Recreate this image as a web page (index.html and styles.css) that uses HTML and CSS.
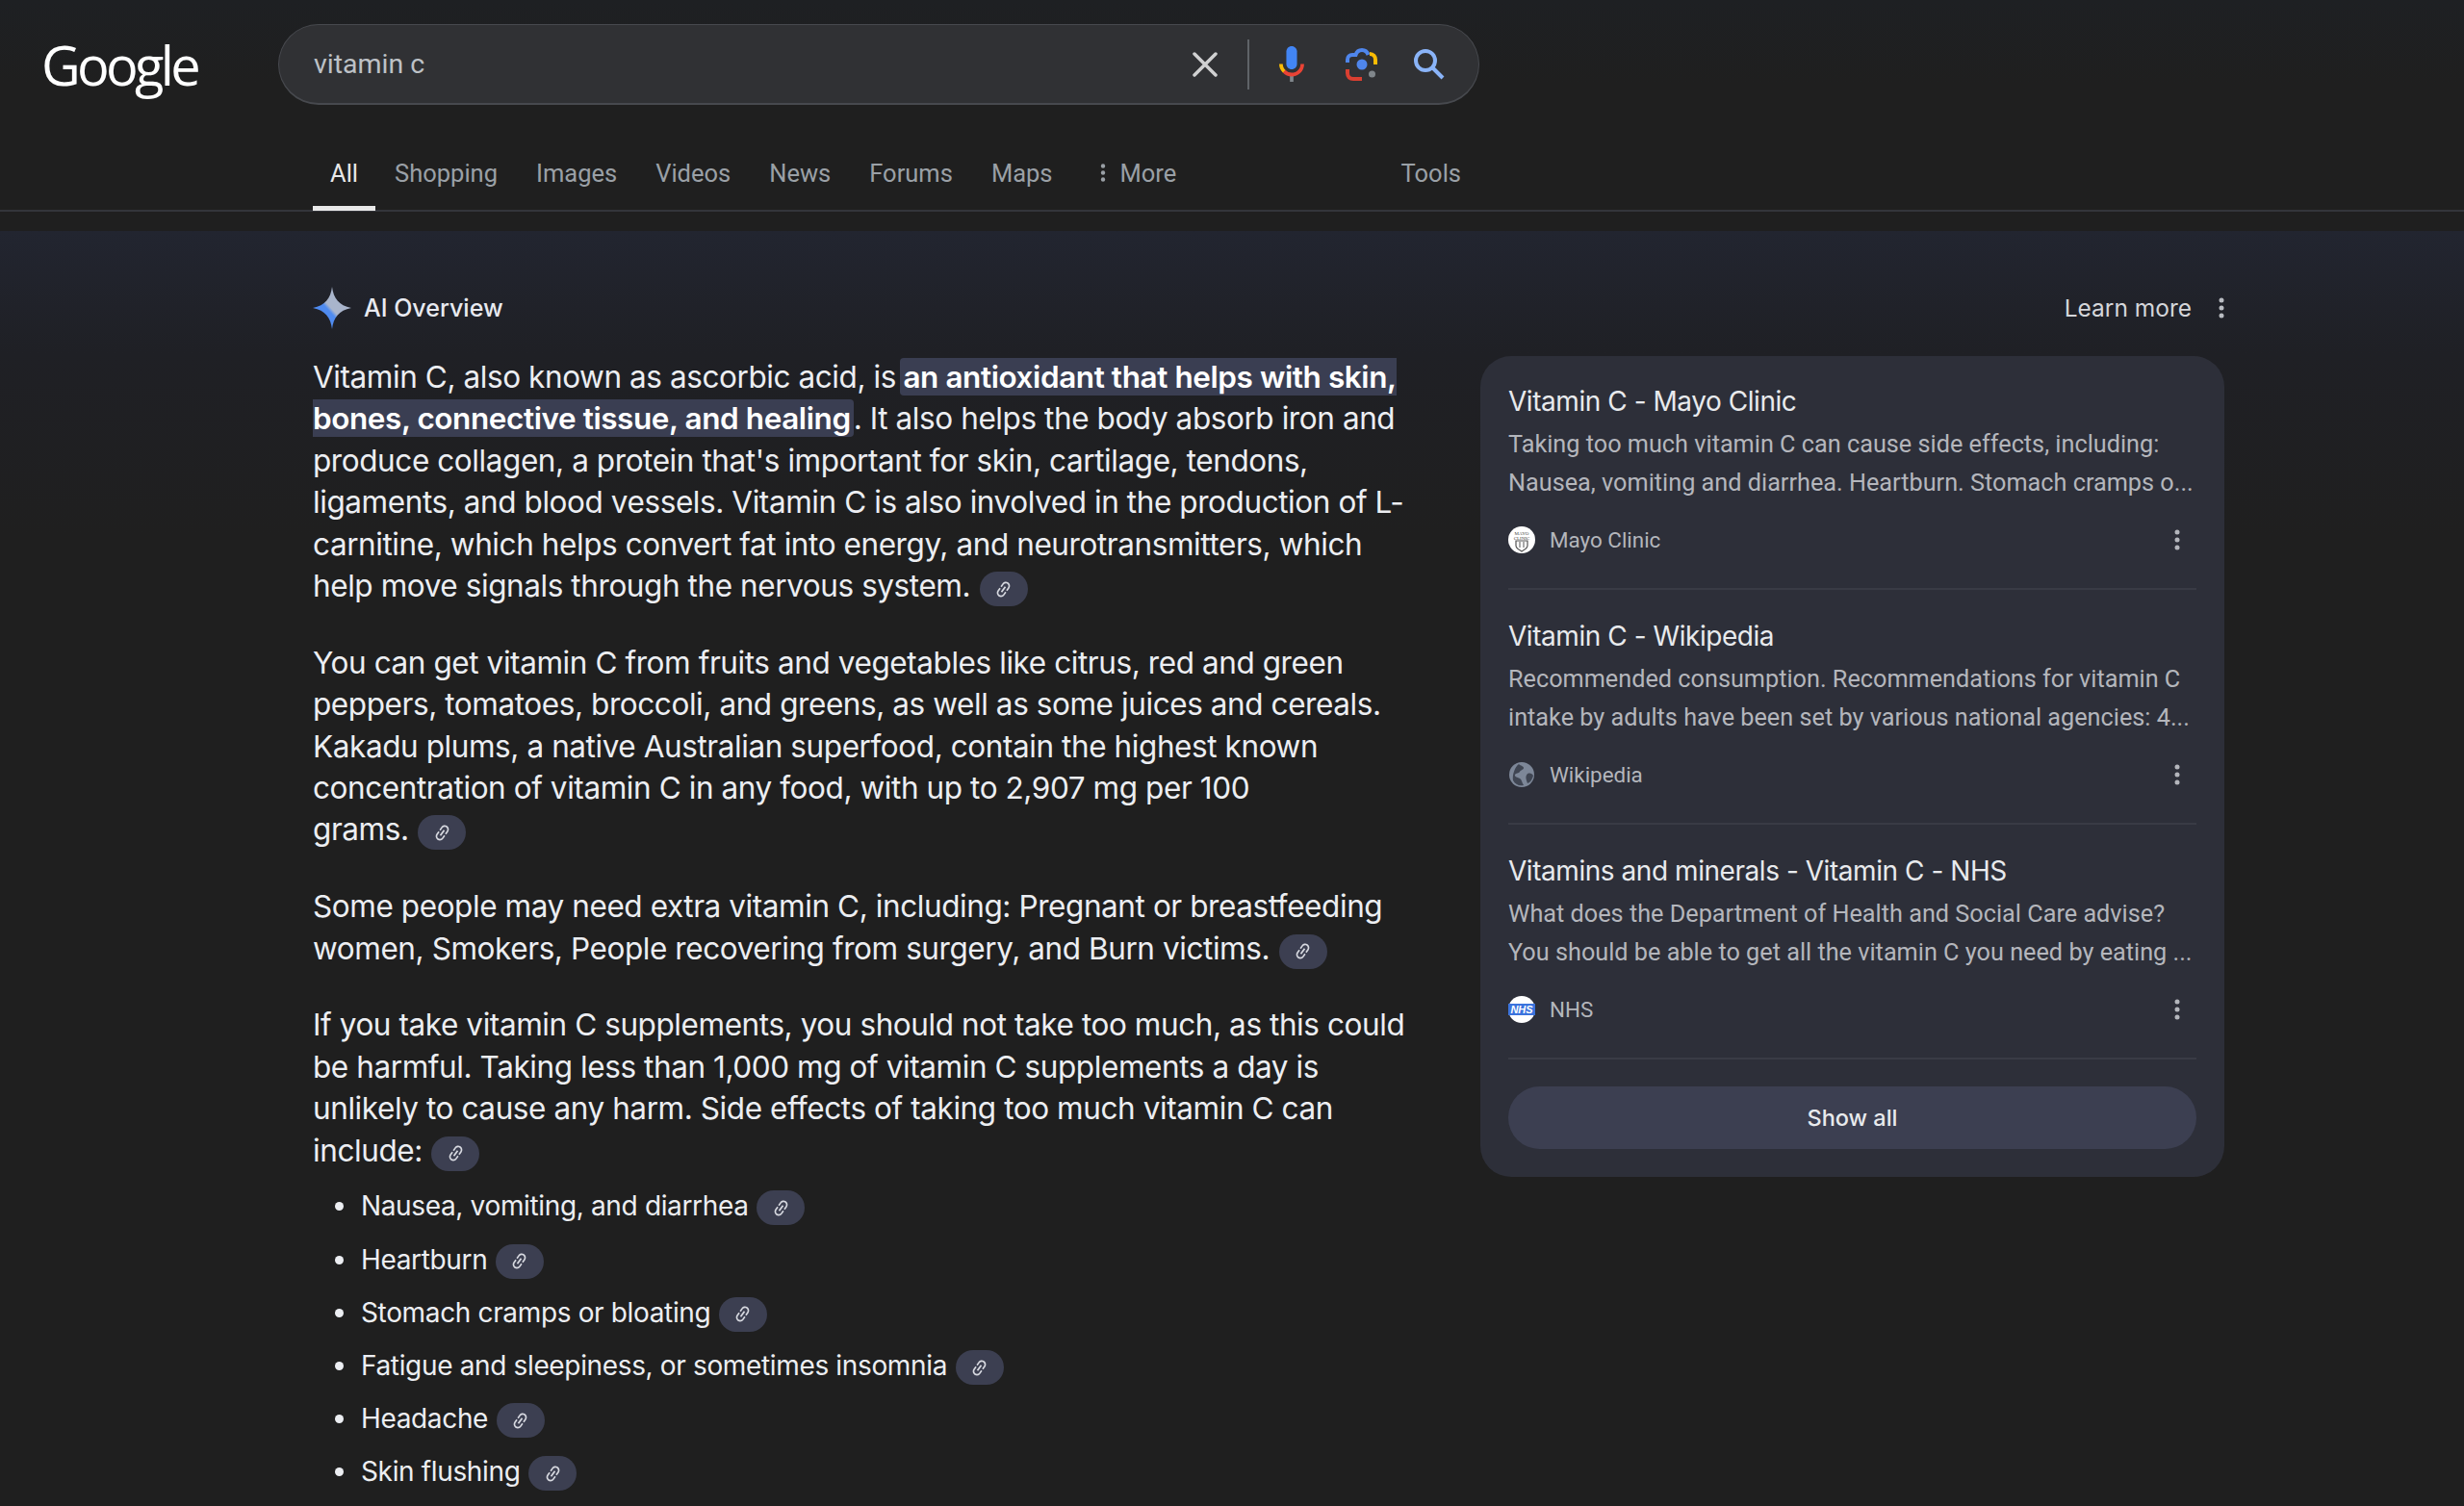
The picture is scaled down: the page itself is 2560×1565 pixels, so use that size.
FILE: index.html
```html
<!DOCTYPE html>
<html lang="en">
<head>
  <meta charset="UTF-8" />
  <title>vitamin c - Google Search</title>
  <link rel="stylesheet" href="styles.css">
</head>
<body>
  <svg class="defs" width="0" height="0">
    <symbol id="link" viewBox="0 0 24 24">
      <path transform="rotate(-55 12 12)" d="M3.9 12c0-1.71 1.39-3.1 3.1-3.1h4V7H7c-2.76 0-5 2.24-5 5s2.24 5 5 5h4v-1.9H7c-1.71 0-3.1-1.39-3.1-3.1zM8 13h8v-2H8v2zm9-6h-4v1.9h4c1.71 0 3.1 1.39 3.1 3.1s-1.39 3.1-3.1 3.1h-4V17h4c2.76 0 5-2.24 5-5s-2.24-5-5-5z"/>
    </symbol>
    <symbol id="dots" viewBox="0 0 6 24">
      <circle cx="3" cy="4" r="2.5"/><circle cx="3" cy="12" r="2.5"/><circle cx="3" cy="20" r="2.5"/>
    </symbol>
  </svg>

  <header>
    <div class="top-row">
      <div class="logo">Google</div>
      <div class="search-box">
        <span class="query">vitamin c</span>
        <svg class="ico-clear" viewBox="0 0 26 26"><path d="M2 2l22 22M24 2L2 24"/></svg>
        <span class="search-divider"></span>
        <svg class="ico-mic" viewBox="5 2 14 20">
          <path fill="#4285f4" d="m12 15c1.66 0 3-1.31 3-2.97v-7.02c0-1.66-1.34-3.01-3-3.01s-3 1.34-3 3.01v7.02c0 1.66 1.34 2.97 3 2.97z"/>
          <path fill="#80868b" d="m11 18.08h2v3.92h-2z"/>
          <path fill="#fbbc04" d="m7.05 16.87c-1.27-1.33-2.05-2.83-2.05-4.87h2c0 1.45 0.56 2.42 1.47 3.38v0.32l-1.15 1.18z"/>
          <path fill="#ea4335" d="m12 16.93a4.97 5.25 0 0 1 -3.54 -1.55l-1.41 1.49c1.26 1.34 3.02 2.13 4.95 2.13 3.87 0 6.99-2.92 6.99-6.99h-1.99c0 2.92-2.24 4.92-5 4.92z"/>
        </svg>
        <svg class="ico-lens" viewBox="0 0 33 34" fill="none" stroke-width="4">
          <path stroke="#4f86ec" d="M2 15v-3c0-3 2-5 5-5h3.5c1-3 3.5-5 6.500-5s5.500 2 6.500 5"/>
          <path stroke="#fbbc04" d="M25 6c4 0 6 3 6 6v5"/>
          <path stroke="#d93f31" d="M2 22v4c0 4 2.500 6 6 6h9"/>
          <circle cx="17" cy="17" r="5.500" fill="#4f86ec" stroke="none"/>
          <circle cx="27.500" cy="27" r="3.500" fill="#80868b" stroke="none"/>
        </svg>
        <svg class="ico-search" viewBox="0 0 32 32" fill="none"><circle cx="12" cy="12" r="10"/><path d="M19.500 19.500L30 30"/></svg>
      </div>
    </div>
    <nav class="tabs">
      <a class="tab active">All</a>
      <a class="tab">Shopping</a>
      <a class="tab">Images</a>
      <a class="tab">Videos</a>
      <a class="tab">News</a>
      <a class="tab">Forums</a>
      <a class="tab">Maps</a>
      <a class="tab more"><svg class="dots-ico"><use href="#dots"/></svg>More</a>
      <a class="tab tools">Tools</a>
    </nav>
  </header>

  <main class="overview">
    <div class="ov-head">
      <div class="ov-title">
        <svg class="star" viewBox="0 0 40 44">
          <defs>
            <linearGradient id="starfill" x1="0.2" y1="0.85" x2="0.8" y2="0.25">
              <stop offset="0.42" stop-color="#4f8bf0"/>
              <stop offset="0.52" stop-color="#a9b5cc"/>
            </linearGradient>
          </defs>
          <path fill="url(#starfill)" d="M20 0C21.500 12 27 19.500 40 22C27 24.500 21.500 32 20 44C18.500 32 13 24.500 0 22C13 19.500 18.500 12 20 0z"/>
        </svg>
        <span>AI Overview</span>
      </div>
      <div class="ov-learn">
        <span>Learn more</span>
        <svg class="dots-ico"><use href="#dots"/></svg>
      </div>
    </div>

    <div class="ov-body">
      <article class="answer">
        <p>Vitamin C, also known as ascorbic acid, is <mark>an antioxidant that helps with skin,<br>bones, connective tissue, and healing</mark>. It also helps the body absorb iron and<br>produce collagen, a protein that's important for skin, cartilage, tendons,<br>ligaments, and blood vessels. Vitamin C is also involved in the production of L-<br>carnitine, which helps convert fat into energy, and neurotransmitters, which<br>help move signals through the nervous system. <span class="chip"><svg><use href="#link"/></svg></span></p>
        <p>You can get vitamin C from fruits and vegetables like citrus, red and green<br>peppers, tomatoes, broccoli, and greens, as well as some juices and cereals.<br>Kakadu plums, a native Australian superfood, contain the highest known<br>concentration of vitamin C in any food, with up to 2,907 mg per 100<br>grams. <span class="chip"><svg><use href="#link"/></svg></span></p>
        <p>Some people may need extra vitamin C, including: Pregnant or breastfeeding<br>women, Smokers, People recovering from surgery, and Burn victims. <span class="chip"><svg><use href="#link"/></svg></span></p>
        <p>If you take vitamin C supplements, you should not take too much, as this could<br>be harmful. Taking less than 1,000 mg of vitamin C supplements a day is<br>unlikely to cause any harm. Side effects of taking too much vitamin C can<br>include: <span class="chip"><svg><use href="#link"/></svg></span></p>
        <ul>
          <li>Nausea, vomiting, and diarrhea <span class="chip"><svg><use href="#link"/></svg></span></li>
          <li>Heartburn <span class="chip"><svg><use href="#link"/></svg></span></li>
          <li>Stomach cramps or bloating <span class="chip"><svg><use href="#link"/></svg></span></li>
          <li>Fatigue and sleepiness, or sometimes insomnia <span class="chip"><svg><use href="#link"/></svg></span></li>
          <li>Headache <span class="chip"><svg><use href="#link"/></svg></span></li>
          <li>Skin flushing <span class="chip"><svg><use href="#link"/></svg></span></li>
        </ul>
      </article>

      <aside class="sources">
        <div class="source">
          <div class="source-title">Vitamin C - Mayo Clinic</div>
          <div class="source-text">Taking too much vitamin C can cause side effects, including:<br>Nausea, vomiting and diarrhea. Heartburn. Stomach cramps o...</div>
          <div class="source-site">
            <svg class="favicon" viewBox="0 0 28 28">
              <circle cx="14" cy="14" r="14" fill="#fff"/>
              <text class="fav-mayo" x="14" y="9">MAYO</text>
              <text class="fav-mayo" x="14" y="13.500">CLINIC</text>
              <path d="M8 15h12v5c0 3-3 4-6 6c-3-2-6-3-6-6z" fill="none" stroke="#555" stroke-width="1.200"/>
              <path d="M12 16v6M16 16v6" stroke="#555" stroke-width="1"/>
            </svg>
            <span>Mayo Clinic</span>
            <svg class="dots-ico"><use href="#dots"/></svg>
          </div>
        </div>
        <div class="source">
          <div class="source-title">Vitamin C - Wikipedia</div>
          <div class="source-text">Recommended consumption. Recommendations for vitamin C<br>intake by adults have been set by various national agencies: 4...</div>
          <div class="source-site">
            <svg class="favicon" viewBox="0 0 28 28">
              <circle cx="14" cy="14" r="13" fill="#7d8798"/>
              <path d="M11 3c2 2 5 2 5 4s-3 2-4 4-4 1-5 3 3 3 5 4 2 4 4 7c-5 1-9-1-11-5-1-6 2-14 6-17z" fill="#3f4552"/>
              <path d="M20 13c3-1 5 0 6 2-1 4-3 7-6 8-1-3-3-7 0-10z" fill="#3f4552"/>
            </svg>
            <span>Wikipedia</span>
            <svg class="dots-ico"><use href="#dots"/></svg>
          </div>
        </div>
        <div class="source">
          <div class="source-title">Vitamins and minerals - Vitamin C - NHS</div>
          <div class="source-text">What does the Department of Health and Social Care advise?<br>You should be able to get all the vitamin C you need by eating ...</div>
          <div class="source-site">
            <svg class="favicon" viewBox="0 0 28 28">
              <circle cx="14" cy="14" r="14" fill="#fff"/>
              <rect x="0" y="8" width="28" height="12" fill="#3b73dd"/>
              <text class="fav-nhs" x="14" y="18">NHS</text>
            </svg>
            <span>NHS</span>
            <svg class="dots-ico"><use href="#dots"/></svg>
          </div>
        </div>
        <button class="show-all">Show all</button>
      </aside>
    </div>
  </main>
</body>
</html>
```

FILE: styles.css
```css
html, body {
  margin: 0;
  height: 100%;
  overflow: hidden;
}

body {
  background-color: #1f1f1f;
  color: #e8eaf0;
  font-family: 'Inter', sans-serif;
}

.defs {
  position: absolute;
}

header {
  height: 218px;
  border-bottom: 2px solid #33353a;
  background: linear-gradient(#1e2023, #1f1f1f 40%);
}

.top-row {
  display: flex;
  align-items: center;
  padding-top: 25px;
}

.logo {
  width: 246px;
  padding-left: 43px;
  font-family: 'Open Sans', sans-serif;
  font-size: 56px;
  font-weight: 500;
  line-height: 83px;
  letter-spacing: -3.7px;
  color: #fff;
}

.search-box {
  width: 1246px;
  height: 81px;
  border: 1px solid #47494e;
  border-bottom-width: 2px;
  border-radius: 42px;
  background-color: #303134;
  display: flex;
  align-items: center;
}

.query {
  margin-left: 36px;
  flex: 1;
  font-family: 'Roboto', sans-serif;
  font-size: 28.500px;
  color: #bdc1c6;
}

.search-box svg {
  flex: none;
}

.ico-clear {
  width: 26px;
  height: 26px;
  stroke: #d0d1d2;
  stroke-width: 3.500;
  stroke-linecap: round;
}

.search-divider {
  width: 2px;
  height: 52px;
  margin: 0 31px;
  background-color: #5f6368;
}

.ico-mic {
  width: 26px;
  height: 37px;
}

.ico-lens {
  width: 33px;
  height: 34px;
  margin-left: 43px;
}

.ico-search {
  width: 32px;
  height: 32px;
  margin: 0 35px 0 38px;
  stroke: #8ab4f8;
  stroke-width: 4;
}

.tabs {
  display: flex;
  margin: 30px 0 0 325px;
  width: 1213px;
  height: 80px;
  font-family: 'Roboto', sans-serif;
  font-size: 25.500px;
}

.tab {
  box-sizing: border-box;
  padding: 26px 20px 0;
  color: #9aa0a6;
  height: 80px;
}

.tab.active {
  padding: 26px 18px 0;
  color: #e8e8e8;
  border-bottom: 5px solid #e8e8e8;
}

.tab.more {
  display: flex;
  gap: 15px;
  margin-left: 9px;
}

.tab.more .dots-ico {
  height: 21px;
  margin-top: 4px;
}

.tab.tools {
  margin-left: auto;
}

.dots-ico {
  width: 6px;
  height: 24px;
  fill: #9aa0a6;
  flex: none;
}

.overview {
  margin-top: 20px;
  padding: 58px 249px 0 325px;
  height: 1000px;
  background: linear-gradient(#222530, #1f2025 12%, #1f1f1f 30%);
}

.ov-head {
  display: flex;
  justify-content: space-between;
  align-items: center;
  height: 44px;
  margin-bottom: 28px;
}

.ov-title {
  display: flex;
  align-items: center;
  gap: 13px;
  font-size: 25px;
  font-weight: 500;
  color: #e8eaf0;
}

.star {
  width: 40px;
  height: 44px;
}

.ov-learn {
  display: flex;
  align-items: center;
  gap: 28px;
  font-size: 24.500px;
  color: #d4d6da;
}

.ov-learn .dots-ico {
  fill: #b9bcc2;
}

.ov-body {
  display: flex;
}

.answer {
  width: 1213px;
  flex: none;
  font-size: 31.500px;
  line-height: 43.400px;
  letter-spacing: -0.42px;
  color: #eceef2;
}

.answer p {
  margin: 0 0 36.400px;
}

mark {
  background-color: #3a3e52;
  color: #fff;
  font-weight: 600;
  border-radius: 4px;
  padding: 0 3px;
  margin-left: -4px;
}

.chip {
  display: inline-flex;
  align-items: center;
  justify-content: center;
  width: 50px;
  height: 36px;
  margin-left: 1px;
  border-radius: 18px;
  background-color: #3c3f51;
  vertical-align: -2.500px;
}

.chip svg {
  width: 21px;
  height: 21px;
  fill: #d7d9e0;
}

.answer ul {
  margin: -21px 0 0;
  padding-left: 50px;
  list-style: none;
  font-size: 28px;
  letter-spacing: -0.35px;
}

.answer li {
  position: relative;
  height: 55.200px;
}

.answer li::before {
  content: "";
  position: absolute;
  left: -27px;
  top: 17px;
  width: 9px;
  height: 9px;
  border-radius: 50%;
  background-color: #eceef2;
}

.sources {
  width: 773px;
  height: 853px;
  box-sizing: border-box;
  padding: 0 29px;
  border-radius: 32px;
  background-color: #2d2f39;
  flex: none;
}

.source {
  height: 243px;
  margin-bottom: 1px;
  box-sizing: border-box;
  padding-top: 26px;
  border-bottom: 2px solid #393b45;
}

.source-title {
  font-size: 28px;
  line-height: 42px;
  letter-spacing: -0.45px;
  color: #e8eaed;
}

.source-text {
  margin-top: 4px;
  font-family: 'Roboto', sans-serif;
  font-size: 25.250px;
  line-height: 40px;
  white-space: nowrap;
  color: #b4b6bc;
}

.source-site {
  display: flex;
  align-items: center;
  margin-top: 25px;
  font-family: 'Roboto', sans-serif;
  font-size: 22.400px;
  color: #b4b6bc;
}

.source-site span {
  flex: 1;
  margin-left: 15px;
}

.source-site .dots-ico {
  margin-right: 17px;
  fill: #b4b6bc;
}

.favicon {
  width: 28px;
  height: 28px;
}

.fav-mayo {
  font-family: 'Liberation Serif', serif;
  font-size: 5px;
  fill: #444;
  text-anchor: middle;
}

.fav-nhs {
  font-family: 'Liberation Sans', sans-serif;
  font-size: 11px;
  font-weight: 700;
  font-style: italic;
  fill: #fff;
  text-anchor: middle;
}

.show-all {
  display: block;
  width: 100%;
  height: 65px;
  margin-top: 28px;
  border: none;
  border-radius: 33px;
  background-color: #3c3f51;
  color: #e8eaed;
  font-family: 'Inter', sans-serif;
  font-size: 23.500px;
  font-weight: 500;
}
```
